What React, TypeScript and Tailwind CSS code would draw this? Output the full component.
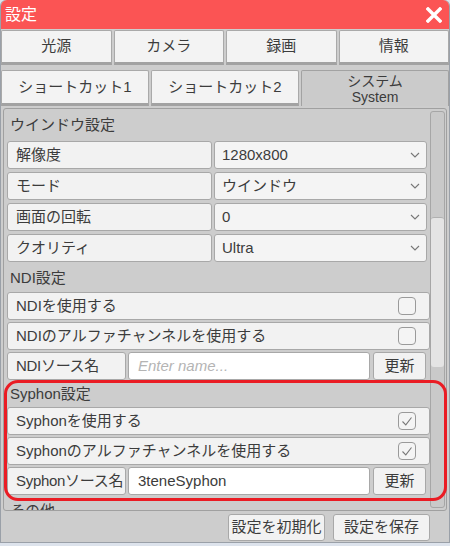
import React from "react";

const font = { fontFamily: '"Liberation Sans", "Noto Sans CJK JP", sans-serif' };

function Chevron() {
  return (
    <svg width="10" height="6" viewBox="0 0 10 6" className="mr-[6px]">
      <path d="M1 1 L5 5 L9 1" fill="none" stroke="#777" strokeWidth="1.1" />
    </svg>
  );
}

function Checkbox({ checked }: { checked?: boolean }) {
  return (
    <div className="w-[18px] h-[18px] rounded-[4px] border border-[#9a9a9a] bg-[#f4f4f4] flex items-center justify-center mr-[13px]">
      {checked && (
        <svg width="14" height="14" viewBox="0 0 14 14">
          <path d="M2.5 7.5 L5.8 10.8 L11.5 3.5" fill="none" stroke="#777" strokeWidth="1.1" />
        </svg>
      )}
    </div>
  );
}

function SelectRow({ label, value }: { label: string; value: string }) {
  return (
    <div className="flex h-[28px] gap-[2px] pr-[3px] mb-[3px] shrink-0">
      <div className="w-[205px] rounded-[3px] border border-[#a8a8a8] bg-[#f2f2f2] flex items-center pl-[8px] text-[15px] text-[#3c3c3c]">
        {label}
      </div>
      <div className="flex-1 rounded-[3px] border border-[#a8a8a8] bg-[#f4f4f4] flex items-center justify-between pl-[7px] text-[15px] text-[#3c3c3c]">
        <span>{value}</span>
        <Chevron />
      </div>
    </div>
  );
}

function CheckRow({ label, checked }: { label: string; checked?: boolean }) {
  return (
    <div className="flex h-[28px] mb-[2px] shrink-0 rounded-[3px] border border-[#a8a8a8] bg-[#f2f2f2] items-center justify-between pl-[8px] text-[15px] text-[#3c3c3c]">
      <span>{label}</span>
      <Checkbox checked={checked} />
    </div>
  );
}

function NameRow({ label, value, placeholder }: { label: string; value?: string; placeholder?: string }) {
  return (
    <div className="flex h-[28px] mb-[2px] shrink-0 gap-[2px] pr-[4px]">
      <div className="w-[119px] rounded-[3px] border border-[#a8a8a8] bg-[#f2f2f2] flex items-center pl-[8px] text-[15px] tracking-[-0.3px] text-[#3c3c3c] whitespace-nowrap overflow-hidden">
        {label}
      </div>
      <div className="w-[242px] rounded-[3px] border border-[#a8a8a8] bg-white flex items-center pl-[9px] text-[15px]">
        {value ? (
          <span className="text-[#3c3c3c]">{value}</span>
        ) : (
          <span className="text-[#b4b4b4] italic">{placeholder}</span>
        )}
      </div>
      <div className="ml-[1px] flex-1 rounded-[3px] border border-[#a8a8a8] bg-[#f2f2f2] flex items-center justify-center text-[15px] text-[#3c3c3c]">
        更新
      </div>
    </div>
  );
}

function Header({ children, h }: { children: React.ReactNode; h: string }) {
  return (
    <div className={`${h} shrink-0 flex items-center pl-[3px] text-[15px] text-[#3c3c3c]`}>{children}</div>
  );
}

export default function App() {
  return (
    <div className="w-[450px] h-[546px] bg-[#dde3ec] overflow-hidden" style={font}>
      <div className="w-[450px] h-[543px] bg-[#cdcdcd] flex flex-col rounded-t-[6px] border-x border-b border-[#9aa0a8]">
        {/* Title bar */}
        <div className="h-[29px] bg-[#fb5454] rounded-t-[6px] flex items-center justify-between pl-[4px] pr-[7px] shrink-0">
          <span className="text-white text-[16px] leading-none">設定</span>
          <svg width="16" height="16" viewBox="0 0 16 16">
            <path d="M2 2 L14 14 M14 2 L2 14" stroke="white" strokeWidth="3.4" strokeLinecap="square" />
          </svg>
        </div>

        {/* Tab row 1 */}
        <div className="grid grid-cols-4 gap-[2px] mt-[1px] h-[35px] shrink-0">
          {["光源", "カメラ", "録画", "情報"].map((t) => (
            <div
              key={t}
              className="bg-[#f3f3f3] border border-[#a9a9a9] border-b-[3px] border-b-[#a2a2a2] rounded-t-[2px] flex items-center justify-center text-[15px] text-[#3c3c3c]"
            >
              {t}
            </div>
          ))}
        </div>

        {/* Tab row 2 */}
        <div className="grid grid-cols-3 gap-[2px] mt-[5px] h-[36px] shrink-0">
          {["ショートカット1", "ショートカット2"].map((t) => (
            <div
              key={t}
              className="bg-[#f3f3f3] border border-[#a9a9a9] border-b-[3px] border-b-[#a2a2a2] rounded-t-[2px] flex items-center justify-center text-[15px] text-[#3c3c3c]"
            >
              {t}
            </div>
          ))}
          <div className="bg-[#cbcbcb] border border-[#a2a2a2] border-b-0 rounded-t-[2px] flex flex-col items-center justify-center text-[14px] text-[#3c3c3c]">
            <span className="leading-[16px]">システム</span>
            <span className="leading-[16px]">System</span>
          </div>
        </div>

        {/* Content panel */}
        <div className="relative mx-[2px] mt-[2px] h-[403px] rounded-[3px] border border-[#a0a0a0] flex shrink-0">
          <div className="flex-1 overflow-hidden pl-[3px] pr-0 flex flex-col">
            <Header h="h-[32px]">ウインドウ設定</Header>
            <SelectRow label="解像度" value="1280x800" />
            <SelectRow label="モード" value="ウインドウ" />
            <SelectRow label="画面の回転" value="0" />
            <SelectRow label="クオリティ" value="Ultra" />
            <Header h="h-[27px]">NDI設定</Header>
            <CheckRow label="NDIを使用する" />
            <CheckRow label="NDIのアルファチャンネルを使用する" />
            <NameRow label="NDIソース名" placeholder="Enter name..." />
            <Header h="h-[25px]">Syphon設定</Header>
            <CheckRow label="Syphonを使用する" checked />
            <CheckRow label="Syphonのアルファチャンネルを使用する" checked />
            <NameRow label="Syphonソース名" value="3teneSyphon" />
            <Header h="h-[28px]">その他</Header>
          </div>
          {/* Scrollbar */}
          <div className="w-[16px] shrink-0 pt-[2px] pb-[2px] pr-[1px]">
            <div className="h-full rounded-[3px] border border-[#a6a6a6] bg-[#c9c9c9] pt-[105px]">
              <div className="h-[150px] rounded-[3px] border-t border-[#b0b0b0] bg-[#e4e4e4]" />
            </div>
          </div>
          {/* Red highlight */}
          <div className="absolute left-0 top-[271px] w-[443px] h-[121px] rounded-[14px] border-[3px] border-[#ea1c24] pointer-events-none" />
        </div>

        {/* Bottom bar */}
        <div className="flex justify-end gap-[8px] pr-[19px] pt-[3px]">
          <div className="w-[97px] h-[27px] rounded-[3px] border border-[#a8a8a8] bg-[#f2f2f2] flex items-center justify-center text-[15px] text-[#3c3c3c]">
            設定を初期化
          </div>
          <div className="w-[97px] h-[27px] rounded-[3px] border border-[#a8a8a8] bg-[#f2f2f2] flex items-center justify-center text-[15px] text-[#3c3c3c]">
            設定を保存
          </div>
        </div>
      </div>
    </div>
  );
}
